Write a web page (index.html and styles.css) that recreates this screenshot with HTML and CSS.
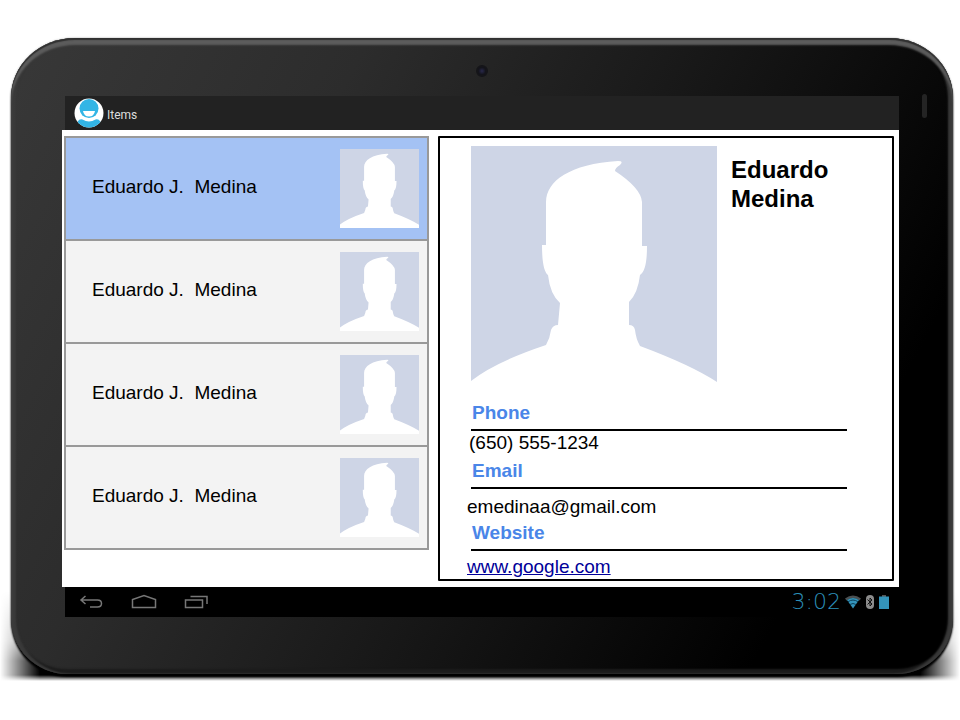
FILE: index.html
```html
<!DOCTYPE html>
<html lang="en">
<head>
<meta charset="utf-8">
<title>Items</title>
<link rel="stylesheet" href="styles.css">
</head>
<body>
<svg class="defs" aria-hidden="true">
  <symbol id="portrait" viewBox="0 0 246 246" preserveAspectRatio="none">
    <rect width="246" height="246" fill="#ced5e6"/>
    <path fill="#fff" d="M0 235Q24 216 75 199Q79 192 80 184Q82 179 87 179L89 157Q79 148 77 129C73 126 71 116 71 99H75V56C75 35 99 18 147 15Q153 15 149 19Q144 22 144 25Q170 42 171 56V100H176C176 116 174 126 169 129Q167 147 158 156V179Q163 179 164 184Q165 193 169 200Q220 219 246 236V246H0Z"/>
  </symbol>
</svg>
<div class="tablet">
  <span class="camera"></span>
  <span class="speaker"></span>
  <header class="app-bar">
    <svg class="logo" viewBox="0 0 30 30" aria-hidden="true">
      <defs><clipPath id="disc"><circle cx="15" cy="15" r="14.5"/></clipPath></defs>
      <circle cx="15" cy="15" r="14.5" fill="#fff"/>
      <g clip-path="url(#disc)">
        <circle cx="15" cy="10.500" r="9.500" fill="#33b5e5"/>
        <path fill="#fff" d="M9 13H21Q20 18.500 15 18.500T9 13Z"/>
        <path fill="#33b5e5" d="M2 30Q3 20 8.500 21.500Q15 25.500 21.500 21.500Q27 20 28 30Z"/>
      </g>
    </svg>
    <h1 class="app-title">Items</h1>
  </header>
  <main class="content">
    <ul class="contacts">
      <li><button class="contact selected" type="button"><span class="label">Eduardo J.&nbsp; Medina</span><svg class="thumb" aria-hidden="true"><use href="#portrait"/></svg></button></li>
      <li><button class="contact" type="button"><span class="label">Eduardo J.&nbsp; Medina</span><svg class="thumb" aria-hidden="true"><use href="#portrait"/></svg></button></li>
      <li><button class="contact" type="button"><span class="label">Eduardo J.&nbsp; Medina</span><svg class="thumb" aria-hidden="true"><use href="#portrait"/></svg></button></li>
      <li><button class="contact" type="button"><span class="label">Eduardo J.&nbsp; Medina</span><svg class="thumb" aria-hidden="true"><use href="#portrait"/></svg></button></li>
    </ul>
    <section class="detail">
      <div class="profile">
        <svg class="photo" aria-hidden="true"><use href="#portrait"/></svg>
        <h2 class="name">Eduardo Medina</h2>
      </div>
      <dl class="fields">
        <dt>Phone</dt>
        <dd class="phone">(650) 555-1234</dd>
        <dt>Email</dt>
        <dd>emedinaa@gmail.com</dd>
        <dt>Website</dt>
        <dd class="website"><a href="#website">www.google.com</a></dd>
      </dl>
    </section>
  </main>
  <footer class="system-bar">
    <nav class="keys">
      <button type="button" aria-label="Back"><svg width="26" height="16" viewBox="0 0 26 16"><path d="M6.500 2L2 6L6.500 10M2.500 6H18.500Q22.500 6 22.500 9.500T18.500 13H11"/></svg></button>
      <button type="button" aria-label="Home"><svg width="26" height="16" viewBox="0 0 26 16"><path d="M1.500 13.500V5.500L13 1.500L24.500 5.500V13.500Z"/></svg></button>
      <button type="button" aria-label="Recent apps"><svg width="26" height="16" viewBox="0 0 26 16"><path d="M2.500 6H19.500V13.500H2.500ZM7.500 2.500H24V10"/></svg></button>
    </nav>
    <div class="status">
      <time class="clock">3:02</time>
      <svg width="16" height="14" viewBox="0 0 16 14" aria-hidden="true">
        <path d="M0 3.500Q8-2.500 16 3.500L14.500 5.500Q8 1 1.500 5.500Z" fill="#4b5052"/>
        <path d="M2 5Q8 1 14 5L8 13.500Z" fill="#3494ba"/>
        <path d="M3 6.800Q8 3.300 13 6.800M5 9.500Q8 7.500 11 9.500" fill="none" stroke="#0b4059"/>
      </svg>
      <svg width="10" height="14" viewBox="0 0 10 14" aria-hidden="true">
        <rect x="1" y="0" width="8" height="14" rx="4" fill="#8c8c8c"/>
        <path d="M2.500 4.500L7 9L5 11V3L7 5L2.500 9.500" fill="none" stroke="#111"/>
      </svg>
      <svg width="10" height="14" viewBox="0 0 10 14" aria-hidden="true">
        <path d="M3 0H7V2H3Z" fill="#555"/><path d="M0 1.500H10V14H0Z" fill="#3494ba"/>
      </svg>
    </div>
  </footer>
</div>
</body>
</html>
```
FILE: styles.css
```css
* {
  box-sizing: border-box;
}

body {
  margin: 0;
  padding: 38px 7px 40px 11px;
  background: #fff;
  color: #000;
  font: 19px/22px "Liberation Sans", Arial, sans-serif;
  overflow-x: hidden;
}

h1, h2, ul, dl, dd {
  margin: 0;
  padding: 0;
}

button {
  font: inherit;
  color: inherit;
  cursor: pointer;
}

.defs {
  position: absolute;
  width: 0;
  height: 0;
}

/* Device */
.tablet {
  position: relative;
  padding: 58px 54px 57px 51px;
  border-radius: 64px 64px 56px 56px / 60px 60px 56px 56px;
  background: linear-gradient(118deg, #383838 0%, #2c2c2c 28%, #1a1a1a 52%, #000 84%);
  box-shadow:
    inset 0 2px 1px #303030,
    inset 0 7px 2px #5c5c5c,
    inset 5px 0 2px #3a3a3a,
    inset -5px 0 2px #383838,
    inset 0 -5px 2px #1c1c1c,
    0 0 2px rgba(0, 0, 0, 0.4),
    0 3px 2px #000;
}

.tablet::before {
  content: "";
  position: absolute;
  z-index: -1;
  left: -11px;
  right: -7px;
  bottom: -7px;
  height: 90px;
  background: linear-gradient(to right, transparent, #000 40px, #000 calc(100% - 40px), transparent);
  mask-image: linear-gradient(to bottom, transparent, rgba(0, 0, 0, 0.5) 50px, #000 70px, #000 84px, transparent);
}

.camera {
  position: absolute;
  top: 27px;
  left: calc(50% - 6px);
  width: 12px;
  height: 12px;
  border: 2px solid #151519;
  border-radius: 50%;
  background: radial-gradient(#29294c, #15151d 60%);
}

.speaker {
  position: absolute;
  top: 56px;
  right: 26px;
  width: 5px;
  height: 24px;
  border-radius: 3px;
  background: #242424;
}

.app-bar {
  display: flex;
  align-items: center;
  gap: 3px;
  height: 34px;
  margin-left: 3px;
  padding-left: 9px;
  background: #222;
}

.logo {
  width: 30px;
  height: 30px;
}

.app-title {
  padding-top: 3px;
  color: #ddd;
  font: 12px/16px Roboto, sans-serif;
}

.content {
  display: grid;
  grid-template-columns: 365fr 456fr;
  align-items: start;
  gap: 9px;
  padding: 6px 5px 6px 2px;
  background: #fff;
}

/* Contact list */
.contacts {
  list-style: none;
}

.contacts li + li {
  margin-top: -2px;
}

.contact {
  display: flex;
  align-items: center;
  justify-content: space-between;
  width: 100%;
  padding: 11px 8px 11px 26px;
  border: 2px solid #999;
  background: #f3f3f3;
  text-align: left;
}

.contact.selected {
  background: #a4c2f4;
}

.label {
  padding-bottom: 4px;
}

.thumb {
  width: 79px;
  height: 79px;
}

/* Contact detail */
.detail {
  padding: 8px 45px 1px 27px;
  border: 2px solid #000;
  border-radius: 1px;
}

.profile {
  display: flex;
  gap: 14px;
  margin-left: 4px;
}

.photo {
  flex: none;
  width: 246px;
  height: 246px;
}

.name {
  padding-top: 9px;
  font-size: 24px;
  line-height: 29px;
}

.fields {
  padding-top: 10px;
}

.fields dt {
  margin-left: 4px;
  padding: 0 0 5px 1px;
  border-bottom: 2px solid #000;
  color: #4a86e8;
  font-weight: bold;
}

.fields dd {
  padding: 7px 0 4px;
}

.fields .phone {
  padding: 1px 0 6px 2px;
}

.fields .website {
  padding: 5px 0 0;
}

.fields a {
  color: #009;
}

/* System bar */
.system-bar {
  display: flex;
  align-items: center;
  justify-content: space-between;
  height: 30px;
  margin-left: 3px;
  padding: 0 10px 0 14px;
  background: #000;
}

.keys,
.status {
  display: flex;
  align-items: center;
}

.keys {
  gap: 26px;
}

.keys button {
  display: flex;
  padding: 0;
  border: 0;
  background: none;
}

.keys path {
  fill: none;
  stroke: #777;
  stroke-width: 1.5;
}

.status {
  gap: 4px;
}

.clock {
  color: #2b8fb8;
  font: 200 22px/24px "DejaVu Sans", sans-serif;
}
```
